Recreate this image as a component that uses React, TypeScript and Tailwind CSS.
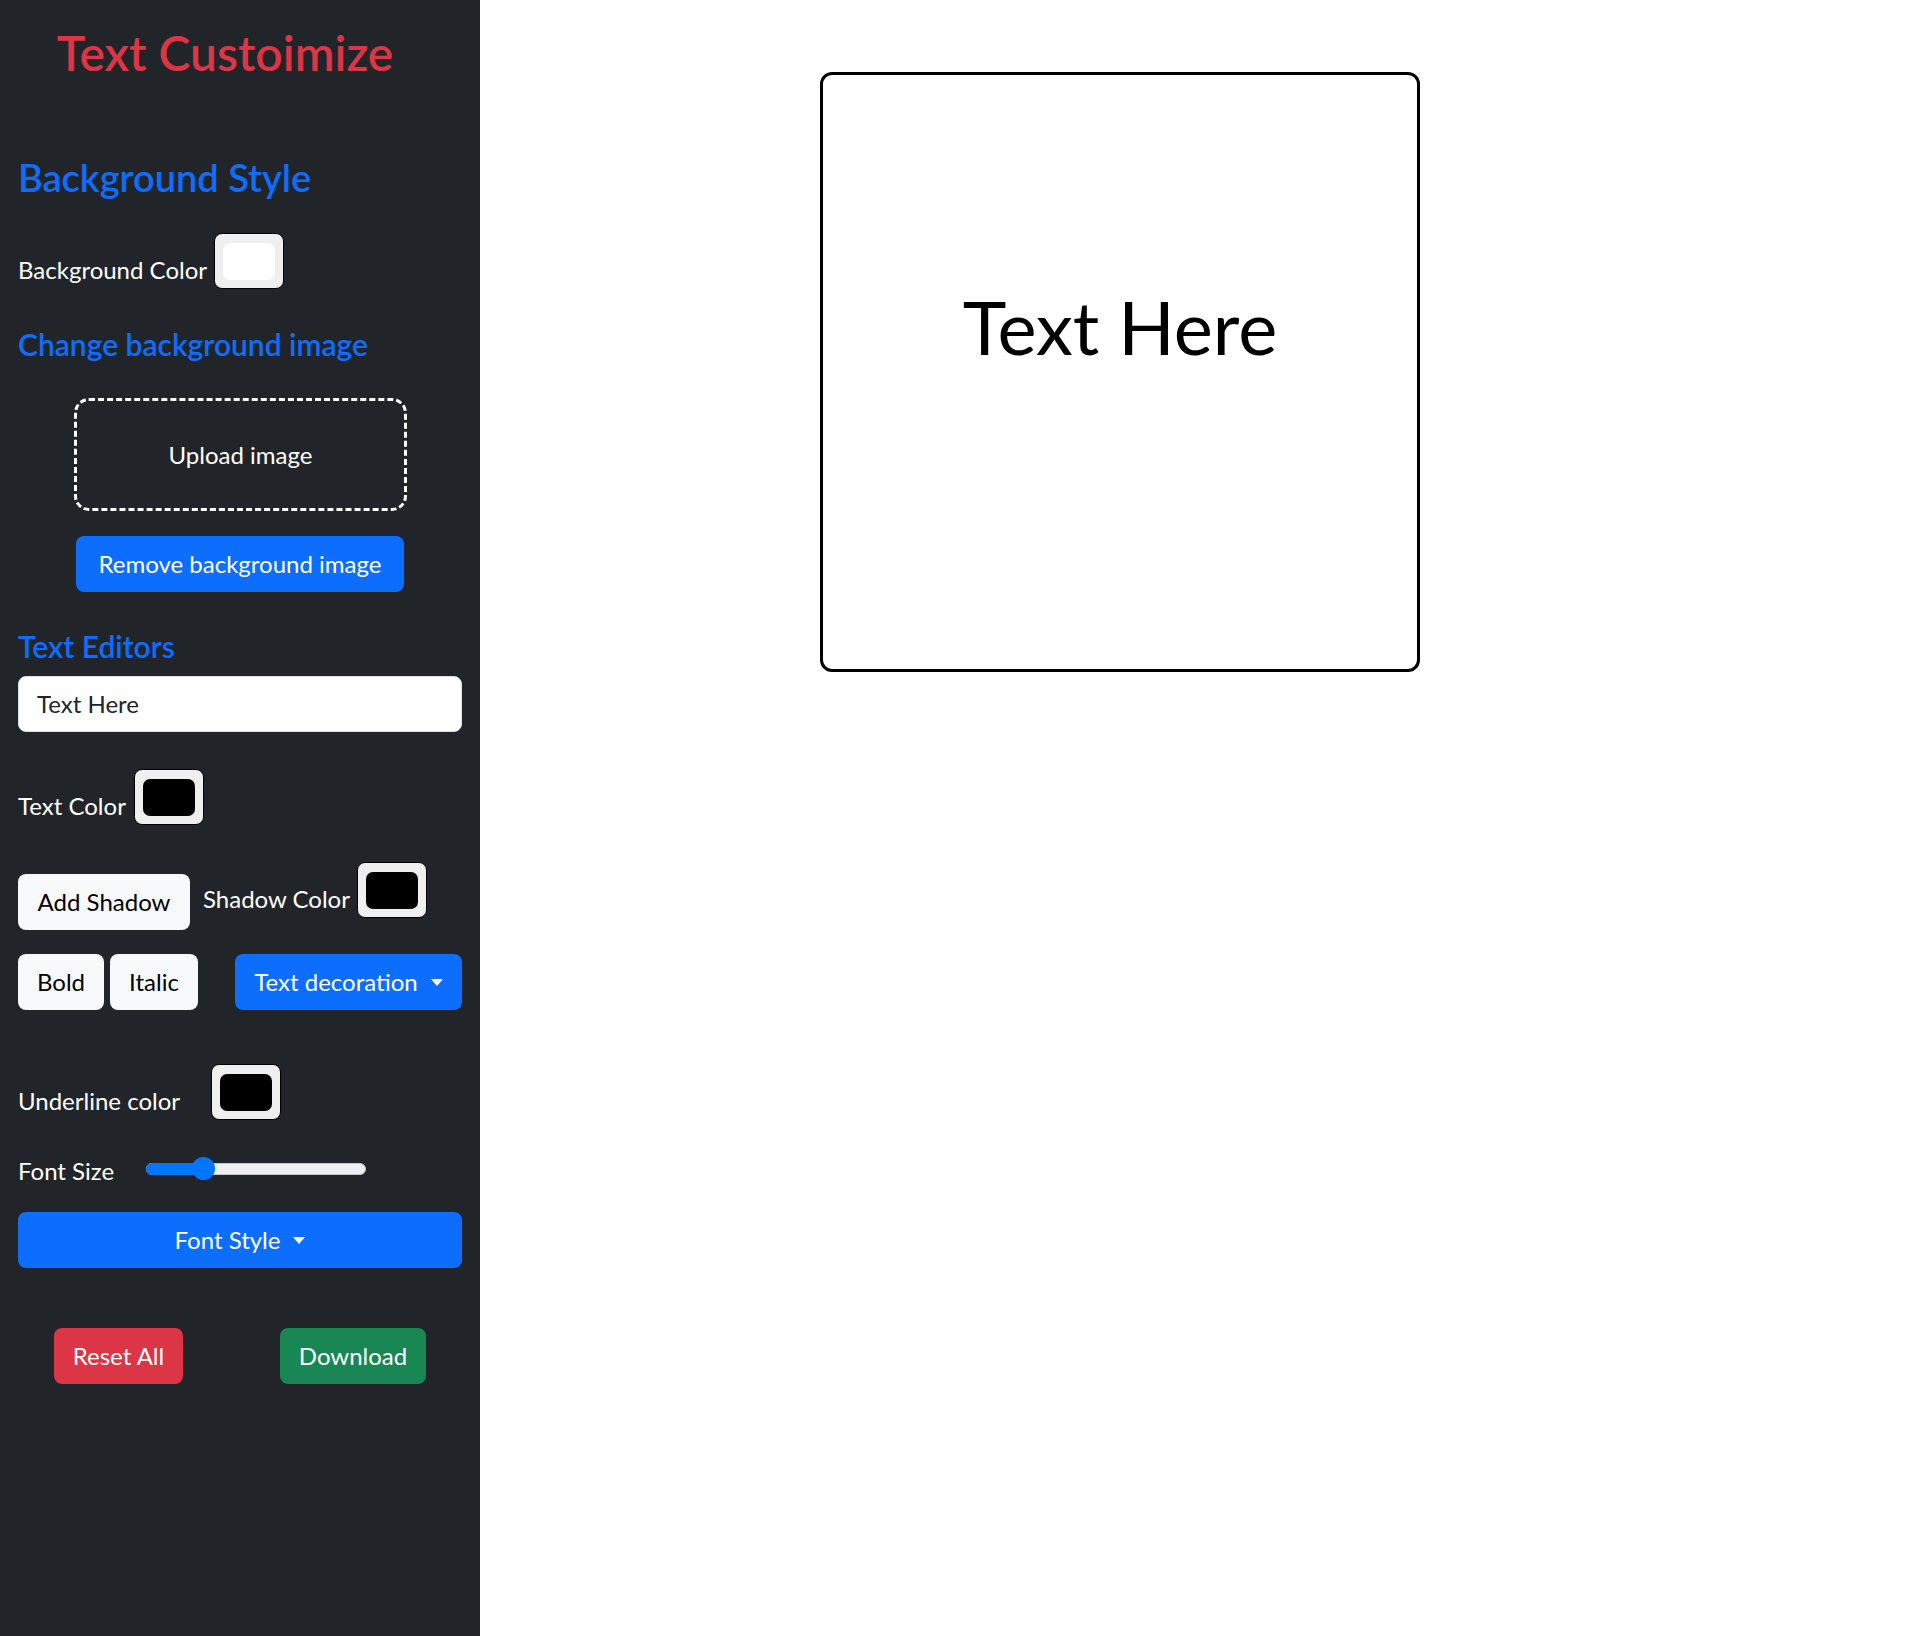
import React from "react";

const Swatch = ({ color }: { color: string }) => (
  <div className="w-[70px] h-[56px] rounded-[8px] border border-black bg-[#efefef] pt-[9px] pb-[8px] px-[8px] shrink-0">
    <div className="w-full h-full rounded-[7px]" style={{ backgroundColor: color }} />
  </div>
);

const Caret = () => (
  <span className="inline-block ml-[13px] w-0 h-0 border-t-[7px] border-t-white border-x-[6px] border-x-transparent" />
);

const App = () => {
  return (
    <div className="flex w-full min-h-[1636px] bg-white font-['Lato','Segoe_UI',sans-serif]">
      {/* sidebar */}
      <div className="w-[480px] shrink-0 bg-[#212529] px-[18px] text-[24px] leading-[30px] text-white">
        <h1 className="pt-[23px] pr-[30px] text-center text-[48px] leading-[60px] font-semibold text-[#dc3545]">
          Text Custoimize
        </h1>

        <h2 className="mt-[70px] text-[38px] leading-[48px] font-semibold text-[#0d6efd]">Background Style</h2>

        <div className="mt-[32px] flex items-start">
          <span className="mt-[22px]">Background Color</span>
          <div className="ml-[7px]">
            <Swatch color="#ffffff" />
          </div>
        </div>

        <h4 className="mt-[37px] text-[30px] leading-[36px] font-semibold text-[#0d6efd]">Change background image</h4>

        <div className="mt-[36px] ml-[56px] w-[333px] h-[113px] rounded-[15px] border-[3px] border-dashed border-white flex items-center justify-center">
          Upload image
        </div>

        <div className="mt-[25px] flex justify-center">
          <button className="w-[328px] h-[56px] rounded-[8px] bg-[#0d6efd] text-white">
            Remove background image
          </button>
        </div>

        <h4 className="mt-[36px] text-[30px] leading-[36px] font-semibold text-[#0d6efd]">Text Editors</h4>

        <div className="mt-[12px] h-[56px] w-full rounded-[8px] bg-white border border-[#dee2e6] px-[18px] flex items-center text-[#212529]">
          Text Here
        </div>

        <div className="mt-[37px] flex items-start">
          <span className="mt-[22px]">Text Color</span>
          <div className="ml-[8px]">
            <Swatch color="#000000" />
          </div>
        </div>

        <div className="mt-[37px] flex items-start">
          <button className="mt-[12px] w-[172px] h-[56px] rounded-[8px] bg-[#f8f9fa] text-black">Add Shadow</button>
          <span className="mt-[22px] ml-[13px]">Shadow Color</span>
          <div className="ml-[7px]">
            <Swatch color="#000000" />
          </div>
        </div>

        <div className="mt-[24px] flex items-start">
          <button className="w-[86px] h-[56px] rounded-[8px] bg-[#f8f9fa] text-black">Bold</button>
          <button className="ml-[6px] w-[88px] h-[56px] rounded-[8px] bg-[#f8f9fa] text-black">Italic</button>
          <button className="ml-[37px] w-[227px] h-[56px] rounded-[8px] bg-[#0d6efd] text-white flex items-center justify-center">
            Text decoration
            <Caret />
          </button>
        </div>

        <div className="mt-[54px] flex items-start">
          <span className="mt-[22px]">Underline color</span>
          <div className="ml-[31px]">
            <Swatch color="#000000" />
          </div>
        </div>

        <div className="mt-[36px] flex items-start">
          <span className="w-[128px] shrink-0">Font Size</span>
          <div className="relative mt-[1px] w-[220px] h-[23px]">
            <div className="absolute left-0 right-0 top-[6px] h-[12px] rounded-full bg-[#efefef] border border-[#c4c4c4]" />
            <div className="absolute left-0 top-[6px] w-[58px] h-[12px] rounded-full bg-[#0075ff]" />
            <div className="absolute left-[46px] top-0 w-[23px] h-[23px] rounded-full bg-[#0075ff]" />
          </div>
        </div>

        <button className="mt-[26px] w-full h-[56px] rounded-[8px] bg-[#0d6efd] text-white flex items-center justify-center">
          Font Style
          <Caret />
        </button>

        <div className="mt-[60px] flex items-start">
          <button className="ml-[36px] w-[129px] h-[56px] rounded-[8px] bg-[#dc3545] text-white">Reset All</button>
          <button className="ml-[97px] w-[146px] h-[56px] rounded-[8px] bg-[#198754] text-white">Download</button>
        </div>
      </div>

      {/* preview */}
      <div className="flex-1">
        <div className="ml-[340px] mt-[72px] w-[600px] h-[600px] rounded-[12px] border-[3px] border-black">
          <p className="pt-[208px] text-center text-[74px] leading-[88px] text-black">Text Here</p>
        </div>
      </div>
    </div>
  );
};

export default App;
